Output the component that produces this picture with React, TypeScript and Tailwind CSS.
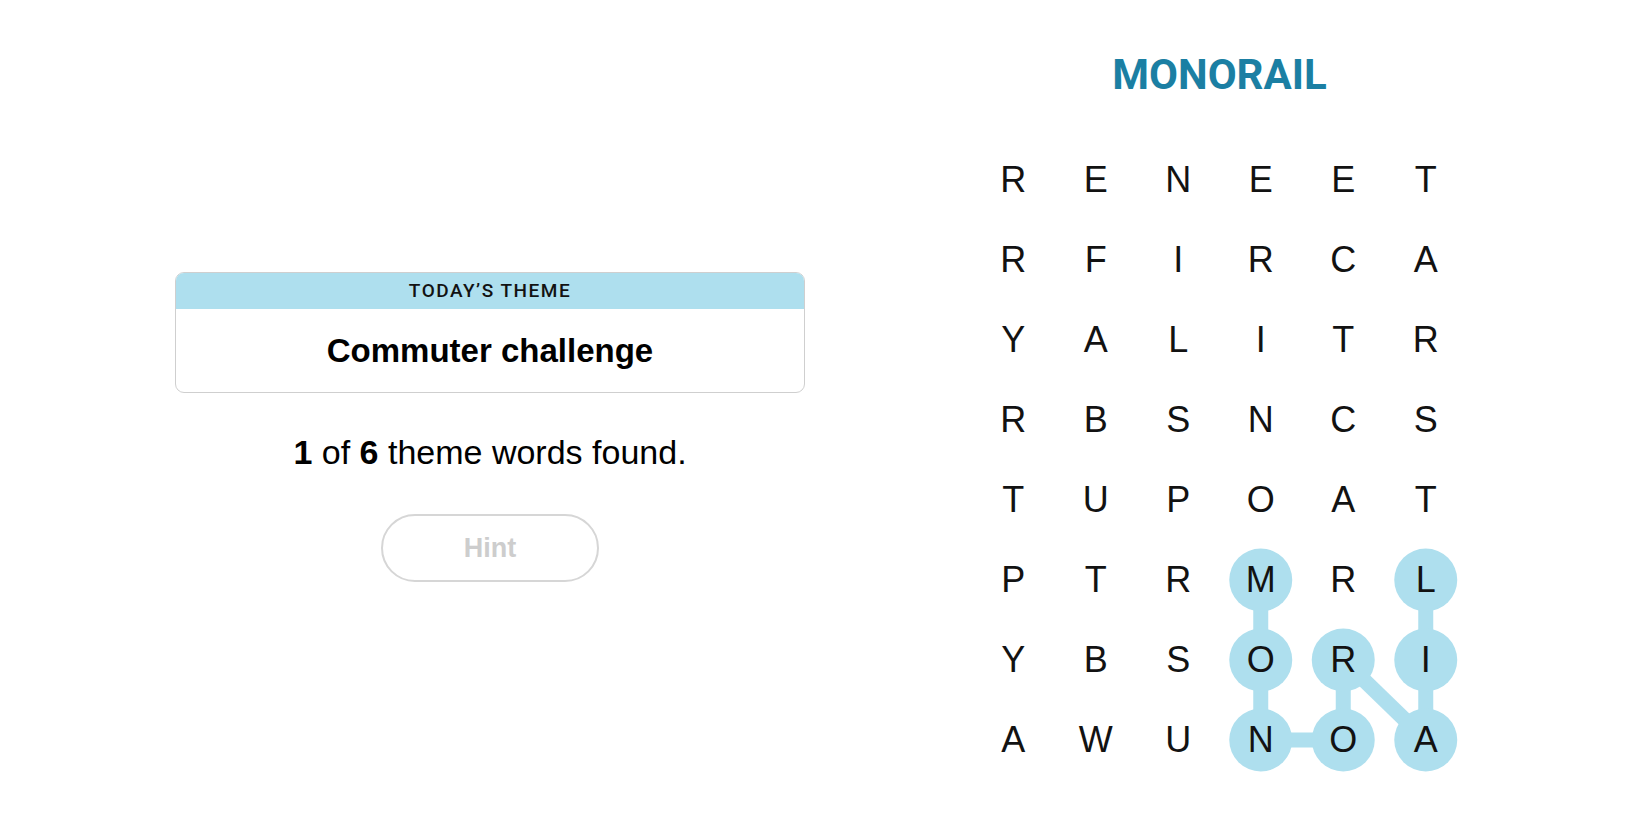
import React from "react";

const grid = [
  ["R", "E", "N", "E", "E", "T"],
  ["R", "F", "I", "R", "C", "A"],
  ["Y", "A", "L", "I", "T", "R"],
  ["R", "B", "S", "N", "C", "S"],
  ["T", "U", "P", "O", "A", "T"],
  ["P", "T", "R", "M", "R", "L"],
  ["Y", "B", "S", "O", "R", "I"],
  ["A", "W", "U", "N", "O", "A"],
];

// path of the found word, as [row, col]
const found: [number, number][] = [
  [5, 3],
  [6, 3],
  [7, 3],
  [7, 4],
  [6, 4],
  [7, 5],
  [6, 5],
  [5, 5],
];

const CELL_W = 82.5;
const CELL_H = 80;
const cx = (c: number) => CELL_W / 2 + c * CELL_W;
const cy = (r: number) => CELL_H / 2 + r * CELL_H;

const Board = () => {
  return (
    <div className="relative w-[495px] h-[640px]">
      <svg className="absolute inset-0" width={495} height={640}>
        {found.slice(1).map(([r, c], i) => {
          const [pr, pc] = found[i];
          return (
            <line
              key={i}
              x1={cx(pc)}
              y1={cy(pr)}
              x2={cx(c)}
              y2={cy(r)}
              stroke="#aedfee"
              strokeWidth={15}
            />
          );
        })}
        {found.map(([r, c], i) => (
          <circle key={i} cx={cx(c)} cy={cy(r)} r={31.5} fill="#aedfee" />
        ))}
      </svg>
      <div className="relative grid grid-cols-6">
        {grid.flat().map((ch, i) => (
          <div
            key={i}
            className="h-[80px] flex items-center justify-center text-[36px] text-[#121212]"
          >
            {ch}
          </div>
        ))}
      </div>
    </div>
  );
};

export default function App() {
  return (
    <div className="w-full h-[825px] bg-white flex font-['Liberation_Sans',Arial,sans-serif] text-black">
      {/* Theme side */}
      <div className="ml-[175px] w-[630px] pt-[272px] flex flex-col items-center">
        <div className="w-full border border-[#cfcfcf] rounded-[9px] overflow-hidden">
          <div className="h-[36px] bg-[#aedfee] flex items-center justify-center font-['Roboto',sans-serif] font-medium text-[19px] tracking-[1.5px] text-[#121212]">
            TODAY’S THEME
          </div>
          <div className="h-[83px] flex items-center justify-center text-[33px] font-bold">
            Commuter challenge
          </div>
        </div>
        <p className="mt-[42px] text-[34px] leading-none">
          <span className="font-bold">1</span> of <span className="font-bold">6</span> theme words
          found.
        </p>
        <button className="mt-[45px] w-[218px] h-[68px] rounded-full border-2 border-[#d6d6d6] text-[27px] font-bold text-[#cdcdcd]">
          Hint
        </button>
      </div>

      {/* Board side */}
      <div className="ml-[167px] w-[495px] flex flex-col items-center">
        <h1 className="mt-[54px] text-[42px] leading-none font-bold text-[#1b7fa3] font-['Roboto',sans-serif]">
          MONORAIL
        </h1>
        <div className="mt-[44px]">
          <Board />
        </div>
      </div>
    </div>
  );
}
